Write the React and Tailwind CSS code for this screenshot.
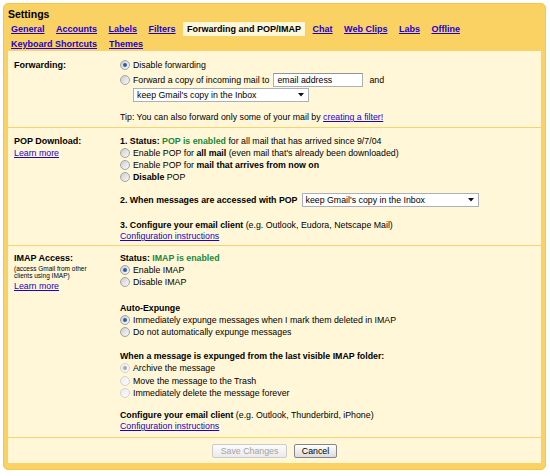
import React from "react";

const Radio = ({ checked, disabled }) => {
  const ring = disabled
    ? "border-[#d2d2d2] from-[#ececec] to-[#fbfbfb]"
    : "border-[#a3a3a3] from-[#cdcdcd] to-[#fafafa]";
  const dot = disabled ? "bg-[#a8a8a8]" : "bg-[#2d5fae]";
  return (
    <span
      className={`w-[10px] h-[10px] mr-[3px] shrink-0 rounded-full border bg-linear-to-br flex items-center justify-center ${ring}`}
    >
      {checked && <span className={`w-[4px] h-[4px] rounded-full ${dot}`}></span>}
    </span>
  );
};

const Option = ({ checked, disabled, className = "h-[12px]", children }) => (
  <div className={`flex items-center ${className}`}>
    <Radio checked={checked} disabled={disabled} />
    <span className="whitespace-nowrap">{children}</span>
  </div>
);

const Select = ({ width, text }) => (
  <div
    className={`h-[14px] ${width} bg-white border border-[#a9b0b8] flex items-center justify-between pl-[3px] pr-[4px]`}
  >
    <span className="whitespace-nowrap">{text}</span>
    <svg width="6" height="4" viewBox="0 0 6 4">
      <path d="M0 0h6L3 3.5z" fill="#111" />
    </svg>
  </div>
);

const Link = ({ children }) => (
  <span className="text-[#2200cc] underline cursor-pointer">{children}</span>
);

const Section = ({ label, children, className }) => (
  <div className={`flex border-b border-[#f5d46c] ${className}`}>
    <div className="w-[112px] shrink-0 pl-[6px]">{label}</div>
    <div className="flex-1">{children}</div>
  </div>
);

const Tab = ({ children }) => (
  <span className="text-[#2200cc] underline font-bold cursor-pointer whitespace-nowrap">
    {children}
  </span>
);

const App = () => {
  return (
    <div className="w-[550px] h-[476px] bg-white pt-[3px] pl-[3px] font-['Liberation_Sans',Arial,sans-serif] text-black text-[8.8px] leading-[12px]">
      <div className="w-[543px] h-[467px] bg-[#fad163] border border-[#f2c74f] rounded-[5px] px-[4px] pt-[3px] flex flex-col">
        <div className="h-[14px] text-[10.5px] leading-[14px] font-bold pl-[0px]">Settings</div>

        {/* Tabs */}
        <div className="mt-[1px] pl-[3px] text-[9px]">
          <div className="h-[14px] flex items-center gap-x-[11.5px]">
            <Tab>General</Tab>
            <Tab>Accounts</Tab>
            <Tab>Labels</Tab>
            <Tab>Filters</Tab>
            <span className="h-[14px] -mx-[4px] px-[4px] bg-[#fff7d7] font-bold flex items-center whitespace-nowrap">
              Forwarding and POP/IMAP
            </span>
            <Tab>Chat</Tab>
            <Tab>Web Clips</Tab>
            <Tab>Labs</Tab>
            <Tab>Offline</Tab>
          </div>
          <div className="h-[15px] flex items-center gap-x-[12px]">
            <Tab>Keyboard Shortcuts</Tab>
            <Tab>Themes</Tab>
          </div>
        </div>

        {/* Panel */}
        <div className="h-[412px] bg-[#fff7d7] flex flex-col">
          {/* Forwarding */}
          <Section
            className="pt-[8px] pb-[4px]"
            label={<div className="h-[12px] font-bold text-[9px]">Forwarding:</div>}
          >
            <Option checked>Disable forwarding</Option>
            <div className="mt-[1px] h-[16px] flex items-center">
              <Radio />
              <span className="whitespace-nowrap">Forward a copy of incoming mail to</span>
              <div className="ml-[4px] w-[90px] h-[14px] bg-white border border-[#a9b0b8] border-t-[#8d949c] pl-[3px] flex items-center">
                email address
              </div>
              <span className="ml-[6px]">and</span>
            </div>
            <div className="pl-[13px]">
              <Select width="w-[176px]" text="keep Gmail's copy in the Inbox" />
            </div>
            <div className="mt-[9px] h-[12px] whitespace-nowrap">
              Tip: You can also forward only some of your mail by <Link>creating a filter!</Link>
            </div>
          </Section>

          {/* POP */}
          <Section
            className="pt-[7px] pb-[3px]"
            label={
              <>
                <div className="h-[12px] font-bold text-[9px]">POP Download:</div>
                <div className="h-[12px]">
                  <Link>Learn more</Link>
                </div>
              </>
            }
          >
            <div className="h-[12px] whitespace-nowrap">
              <b>1. Status: </b>
              <b className="text-[#21873a]">POP is enabled</b> for all mail that has arrived since 9/7/04
            </div>
            <Option>
              Enable POP for <b>all mail</b> (even mail that's already been downloaded)
            </Option>
            <Option>
              Enable POP for <b>mail that arrives from now on</b>
            </Option>
            <Option>
              <b>Disable</b> POP
            </Option>
            <div className="mt-[10px] h-[14px] flex items-center">
              <b className="whitespace-nowrap mr-[4px]">2. When messages are accessed with POP</b>
              <Select width="w-[177px]" text="keep Gmail's copy in the Inbox" />
            </div>
            <div className="mt-[12px] h-[12px] whitespace-nowrap">
              <b>3. Configure your email client</b> (e.g. Outlook, Eudora, Netscape Mail)
            </div>
            <div className="h-[11px] leading-[11px]">
              <Link>Configuration instructions</Link>
            </div>
          </Section>

          {/* IMAP */}
          <Section
            className="pt-[6px] pb-[5px]"
            label={
              <>
                <div className="h-[12px] font-bold text-[9px]">IMAP Access:</div>
                <div className="text-[6.5px] leading-[7px] pt-[1px]">
                  (access Gmail from other
                  <br />
                  clients using IMAP)
                </div>
                <div className="mt-[1px] h-[12px]">
                  <Link>Learn more</Link>
                </div>
              </>
            }
          >
            <div className="h-[12px] font-bold">
              Status: <span className="text-[#21873a]">IMAP is enabled</span>
            </div>
            <Option checked>Enable IMAP</Option>
            <Option>Disable IMAP</Option>
            <div className="mt-[14px] h-[12px] font-bold">Auto-Expunge</div>
            <Option checked>Immediately expunge messages when I mark them deleted in IMAP</Option>
            <Option>Do not automatically expunge messages</Option>
            <div className="mt-[12px] h-[12px] font-bold whitespace-nowrap">
              When a message is expunged from the last visible IMAP folder:
            </div>
            <Option checked disabled className="h-[12.5px]">
              Archive the message
            </Option>
            <Option disabled className="h-[12.5px]">
              Move the message to the Trash
            </Option>
            <Option disabled className="h-[12.5px]">
              Immediately delete the message forever
            </Option>
            <div className="mt-[9.5px] h-[12px] whitespace-nowrap">
              <b>Configure your email client</b> (e.g. Outlook, Thunderbird, iPhone)
            </div>
            <div className="h-[11px] leading-[11px]">
              <Link>Configuration instructions</Link>
            </div>
          </Section>

          {/* Footer */}
          <div className="h-[25px] flex items-center justify-center gap-[7px]">
            <button className="h-[14px] w-[75px] rounded-[2px] border border-[#cbcbcb] bg-linear-to-b from-[#fbfbfb] to-[#ebebeb] text-[#a3a3a3] text-[8.8px] leading-[12px]">
              Save Changes
            </button>
            <button className="h-[14px] w-[43px] rounded-[2px] border border-[#858585] bg-linear-to-b from-[#ffffff] to-[#dcdcdc] text-black text-[8.8px] leading-[12px]">
              Cancel
            </button>
          </div>
        </div>
      </div>
    </div>
  );
};

export default App;
